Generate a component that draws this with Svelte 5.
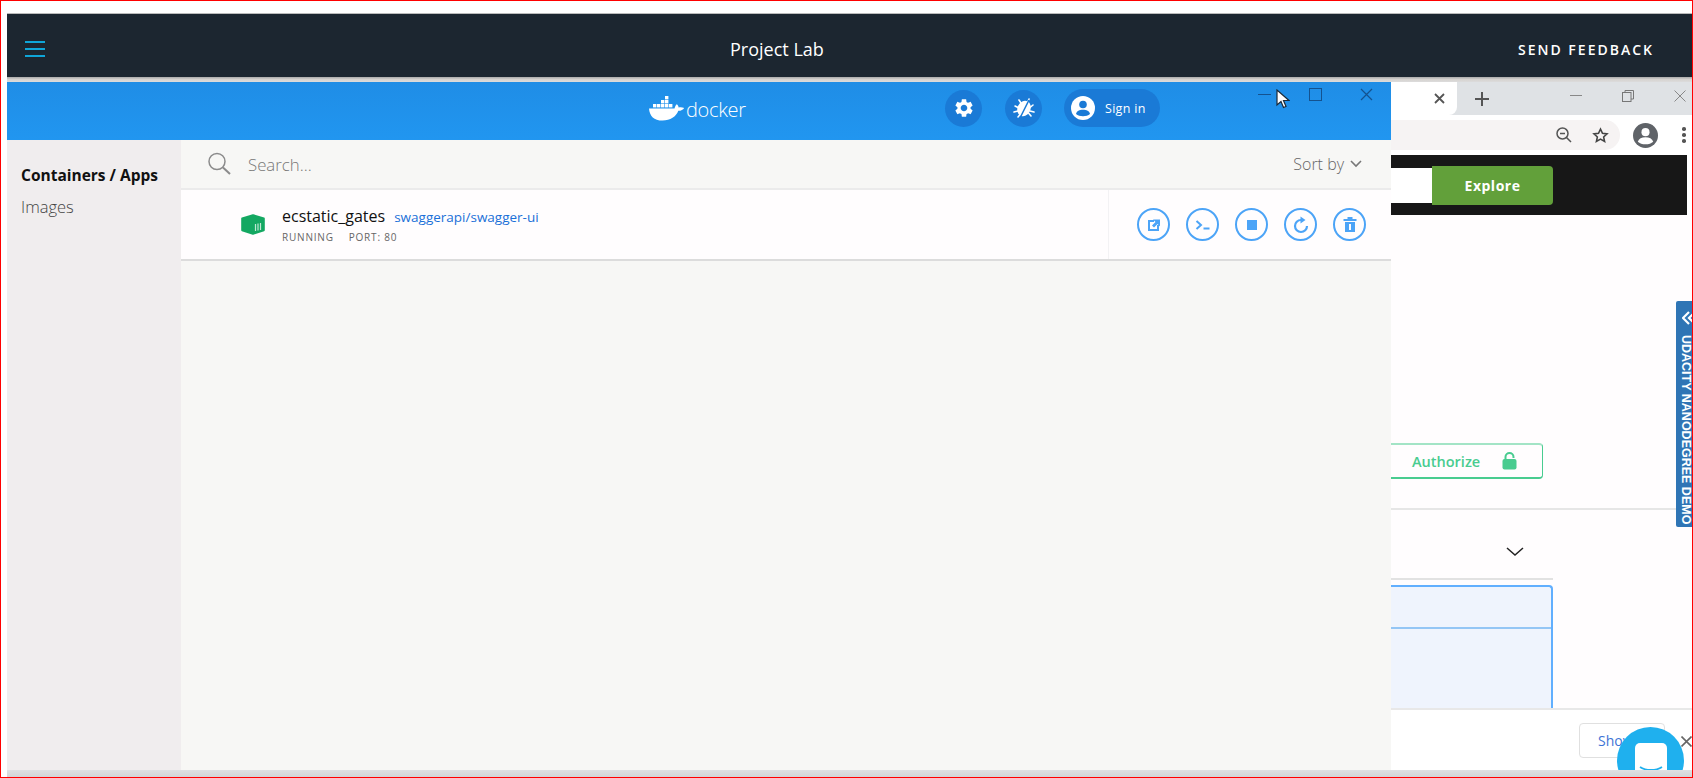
<script>
  let actions = ["open", "cli", "stop", "restart", "delete"];
</script>

<div class="frame">
  <header class="topbar">
    <button class="burger" aria-label="Menu">
      <span></span><span></span><span></span>
    </button>
    <h1>Project Lab</h1>
    <span class="feedback">SEND FEEDBACK</span>
  </header>
  <div class="seam"></div>

  <div class="stage">
    <section class="docker">
      <div class="dk-head">
        <div class="brand">
          <svg width="36" height="26" viewBox="0 0 36 26">
            <g fill="#fff">
              <rect x="8" y="9" width="3.4" height="3.4" /><rect x="12" y="9" width="3.4" height="3.4" /><rect x="16" y="9" width="3.4" height="3.4" />
              <rect x="12" y="5" width="3.4" height="3.4" /><rect x="16" y="5" width="3.4" height="3.4" /><rect x="16" y="1" width="3.4" height="3.4" />
              <rect x="4" y="9" width="3.4" height="3.4" /><rect x="20" y="9" width="3.4" height="3.4" />
              <path d="M0 13.4h25.5c.6-2.2 1.4-3.6 2.4-4.2 1 .9 1.6 2 1.7 3.2 1.900-.5 3.800-.3 5.600.6-1.300 2-3.300 2.900-5.900 2.800C27 21.800 21.500 25.500 13.500 25.500 5 25.500.6 21 0 13.400z" />
            </g>
          </svg>
          <span>docker</span>
        </div>
        <div class="head-tools">
          <span class="round">
            <svg width="22" height="22" viewBox="0 0 24 24"><path fill="#fff" d="M19.14 12.94c.04-.3.06-.61.06-.94 0-.32-.02-.64-.07-.94l2.03-1.58c.18-.14.23-.41.12-.61l-1.92-3.32c-.12-.22-.37-.29-.59-.22l-2.39.96c-.5-.38-1.03-.7-1.62-.94l-.36-2.54c-.04-.24-.24-.41-.48-.41h-3.84c-.24 0-.43.17-.47.41l-.36 2.54c-.59.24-1.13.57-1.62.94l-2.39-.96c-.22-.08-.47 0-.59.22L2.74 8.87c-.12.21-.08.47.12.61l2.03 1.58c-.05.3-.09.63-.09.94s.02.64.07.94l-2.03 1.58c-.18.14-.23.41-.12.61l1.92 3.32c.12.22.37.29.59.22l2.39-.96c.5.38 1.03.7 1.62.94l.36 2.54c.05.24.24.41.48.41h3.840c.24 0 .44-.17.47-.41l.36-2.54c.59-.24 1.13-.56 1.62-.94l2.39.96c.22.08.47 0 .59-.22l1.92-3.32c.12-.22.07-.47-.12-.61l-2.01-1.58zM12 15.6c-1.98 0-3.6-1.62-3.6-3.6s1.62-3.6 3.6-3.6 3.6 1.62 3.6 3.6-1.62 3.6-3.6 3.6z" /></svg>
          </span>
          <span class="round">
            <svg width="26" height="26" viewBox="0 0 26 26">
              <g stroke="#fff" stroke-width="1.600" fill="none" stroke-linecap="round">
                <path d="M8 5l2 3M18 4l-1.500 4M4 11l4 2M22 10l-3 2.500M3 17l4-1M23 17l-4-1M7 22l2.500-3M20 21l-2.500-3" />
              </g>
              <ellipse cx="13" cy="13.500" rx="6.500" ry="8" fill="#fff" transform="rotate(25 13 13.500)" />
              <path d="M18 5L9 23" stroke="#1a7ad6" stroke-width="1.600" />
            </svg>
          </span>
          <span class="signin">
            <svg width="26" height="26" viewBox="0 0 26 26">
              <circle cx="13" cy="13" r="12" fill="#fff" />
              <circle cx="13" cy="9.500" r="3.800" fill="#1a7ad6" />
              <path d="M6 19c.6-3 3.500-4.200 7-4.200s6.400 1.200 7 4.200c-1.800 1.500-4.200 2.200-7 2.200S7.800 20.500 6 19z" fill="#1a7ad6" />
            </svg>
            <span>Sign in</span>
          </span>
        </div>
        <div class="win-ctrl">
          <i class="w-min"></i><i class="w-max"></i>
          <svg width="13" height="13" viewBox="0 0 13 13"><path d="M1 1l11 11M12 1L1 12" stroke="#14528f" stroke-width="1.200" /></svg>
        </div>
      </div>

      <div class="dk-body">
        <aside>
          <div class="nav-on">Containers / Apps</div>
          <div class="nav-off">Images</div>
        </aside>
        <div class="main">
          <div class="search-row">
            <svg class="glass" width="26" height="26" viewBox="0 0 26 26" fill="none" stroke="#8b8b8b">
              <circle cx="11" cy="10.500" r="8" stroke-width="1.500" />
              <path d="M17 16.500l7 6.500" stroke-width="2" />
            </svg>
            <span class="placeholder">Search...</span>
            <span class="sort">Sort by
              <svg width="12" height="8" viewBox="0 0 12 8" fill="none"><path d="M1 1l5 5 5-5" stroke="#777" stroke-width="1.600" /></svg>
            </span>
          </div>
          <div class="row">
            <svg class="box" width="24" height="21" viewBox="0 0 24 21">
              <path d="M12 1.200L22.800 4.500V16.200L12 19.800 1.200 16.200V4.500z" fill="#14a862" stroke="#14a862" stroke-width="2" stroke-linejoin="round" />
              <path d="M14.500 10v7M17 9.500v7M19.500 9v7" stroke="#bfe8d2" stroke-width="1.200" />
            </svg>
            <div class="info">
              <div class="line1">
                <span class="cname">ecstatic_gates</span>
                <span class="image">swaggerapi/swagger-ui</span>
              </div>
              <div class="line2"><span>RUNNING</span><span>PORT: 80</span></div>
            </div>
            <div class="actions">
              {#each actions as a}
                <span class="act">
                  <svg width="22" height="22" viewBox="0 0 22 22" fill="#4ca4f7" stroke="none">
                    {#if a === "open"}
                      <path d="M5 6h6v2H7v7h7v-4h2v6H5z" />
                      <path d="M10 5.500h7v7l-2.500-2.500-3.500 3.500-2-2 3.500-3.500z" />
                    {:else if a === "cli"}
                      <path d="M4.500 7l4.500 4-4.500 4" fill="none" stroke="#4ca4f7" stroke-width="2" />
                      <rect x="11.500" y="13.500" width="6" height="2" />
                    {:else if a === "stop"}
                      <rect x="6" y="6" width="10" height="10" />
                    {:else if a === "restart"}
                      <path d="M11 6a6 6 0 1 0 6 6" fill="none" stroke="#4ca4f7" stroke-width="2.200" />
                      <path d="M10.500 2.500l5 3.500-5 3.500z" />
                    {:else}
                      <rect x="4.500" y="5" width="13" height="2" />
                      <rect x="8.500" y="3" width="5" height="2" />
                      <path d="M6 8h10v10H6zM10 10v6h2v-6z" fill-rule="evenodd" />
                    {/if}
                  </svg>
                </span>
              {/each}
            </div>
          </div>
        </div>
      </div>
    </section>

    <section class="browser">
      <div class="tabstrip">
        <div class="tab">
          <svg width="11" height="11" viewBox="0 0 11 11"><path d="M1 1l9 9M10 1l-9 9" stroke="#555" stroke-width="1.800" /></svg>
        </div>
        <svg class="plus" width="14" height="14" viewBox="0 0 14 14"><path d="M7 0v14M0 7h14" stroke="#555" stroke-width="2" /></svg>
        <div class="br-ctrl">
          <i class="b-min"></i>
          <svg width="12" height="12" viewBox="0 0 12 12" fill="none" stroke="#777"><rect x=".5" y="2.500" width="8.500" height="9" /><path d="M3 2.500V.5h8.500V9H9" /></svg>
          <svg width="12" height="12" viewBox="0 0 12 12"><path d="M.5.5l11 11M11.500.5l-11 11" stroke="#888" stroke-width="1" /></svg>
        </div>
      </div>
      <div class="toolbar">
        <div class="omnibox">
          <svg width="16" height="16" viewBox="0 0 16 16" fill="none" stroke="#555" stroke-width="1.500"><circle cx="6.500" cy="6.500" r="5.500" /><path d="M10.500 10.500l4.500 4.500M4 6.500h5" /></svg>
          <svg width="17" height="17" viewBox="0 0 24 24" fill="none" stroke="#444" stroke-width="2.200"><path d="M12 3l2.800 6 6.400.7-4.800 4.300 1.400 6.500L12 17.200l-5.800 3.300 1.400-6.500L2.800 9.700 9.200 9z" /></svg>
        </div>
        <svg class="avatar" width="25" height="25" viewBox="0 0 26 26">
          <circle cx="13" cy="13" r="13" fill="#5f6368" />
          <circle cx="13" cy="9.500" r="4.200" fill="#fff" />
          <path d="M5 19.500c1-3.300 4-4.600 8-4.600s7 1.300 8 4.600c-1.800 1.700-4.700 2.700-8 2.700s-6.200-1-8-2.700z" fill="#fff" />
        </svg>
        <span class="dots"><i></i><i></i><i></i></span>
      </div>
      <div class="banner">
        <div class="explore">
          <div class="url"></div>
          <div class="go">Explore</div>
        </div>
      </div>

      <div class="page">
        <div class="auth-row">
          <div class="auth">
            <span>Authorize</span>
            <svg width="15" height="18" viewBox="0 0 15 18">
              <path d="M3.500 8V5a4 4 0 0 1 8 0v1" fill="none" stroke="#49cc90" stroke-width="2" />
              <rect x=".5" y="7" width="14" height="10.500" rx="2" fill="#49cc90" />
            </svg>
          </div>
        </div>
        <div class="section-head">
          <svg width="18" height="10" viewBox="0 0 18 10" fill="none"><path d="M1 1l8 7 8-7" stroke="#222" stroke-width="1.500" /></svg>
        </div>
        <div class="op-wrap">
          <div class="op">
            <div class="op-top"></div>
          </div>
        </div>
        <div class="bottom">
          <span class="show">Show</span>
          <svg class="dismiss" width="11" height="11" viewBox="0 0 11 11"><path d="M.5.5l10 10M10.500.5l-10 10" stroke="#666" stroke-width="1.600" /></svg>
        </div>
      </div>
    </section>
  </div>
  <div class="base"></div>

  <!-- overlays -->
  <svg class="cursor" width="14" height="20" viewBox="0 0 14 20">
    <path d="M1 1v15l4-3.500 2.500 6 2.500-1-2.500-6H13z" fill="#fff" stroke="#1b2a38" stroke-width="1.200" />
  </svg>
  <div class="demo-tab">
    <svg width="16" height="14" viewBox="0 0 16 14" fill="none" stroke="#fff" stroke-width="2.200"><path d="M7 1L1 7l6 6M13 1L7 7l6 6" /></svg>
    <span>UDACITY NANODEGREE DEMO</span>
  </div>
  <div class="chat">
    <div class="chat-face">
      <svg width="24" height="6" viewBox="0 0 24 6" fill="none"><path d="M1 1c6 4 16 4 22 0" stroke="#1fb0ee" stroke-width="1.800" /></svg>
    </div>
  </div>
</div>

<style>
  :global(body) {
    margin: 0;
    background: #fff;
  }
  .frame {
    position: relative;
    width: 1693px;
    height: 778px;
    box-sizing: border-box;
    border: 1px solid #f00;
    padding: 12px 0 0 6px;
    display: flex;
    flex-direction: column;
    overflow: hidden;
    background: #fff;
    font-family: "Open Sans", sans-serif;
  }
  .topbar {
    flex: none;
    height: 64px;
    background: #1c2630;
    border-top: 1px solid #bbb;
    box-sizing: border-box;
    display: flex;
    align-items: center;
    justify-content: space-between;
    padding: 7px 38px 0 18px;
    position: relative;
  }
  .burger {
    width: 20px;
    height: 16px;
    padding: 0;
    border: 0;
    background: none;
    display: flex;
    flex-direction: column;
    justify-content: space-between;
  }
  .burger span {
    height: 2px;
    background: #0fa6d9;
  }
  h1 {
    margin: 0;
    font-size: 18px;
    font-weight: 400;
    color: #fff;
    position: absolute;
    left: 723px;
  }
  .feedback {
    color: #fff;
    font-size: 14px;
    font-weight: 600;
    letter-spacing: 2px;
  }
  .seam {
    flex: none;
    height: 5px;
    background: linear-gradient(#a9a9a9, #d6d3d0 50%, #dcdcdc);
  }
  .stage {
    flex: 1;
    min-height: 0;
    display: flex;
  }
  .base {
    flex: none;
    height: 7px;
    background: linear-gradient(#dfe1e3, #d3d5d6);
  }

  .docker {
    flex: none;
    width: 1384px;
    display: flex;
    flex-direction: column;
  }
  .dk-head {
    flex: none;
    height: 58px;
    background: linear-gradient(#1f8de6, #2196f0);
    display: flex;
    align-items: center;
    position: relative;
    padding-left: 642px;
    box-sizing: border-box;
  }
  .brand {
    display: flex;
    align-items: flex-end;
    gap: 1px;
    color: #fff;
    font-size: 20px;
    font-weight: 300;
    line-height: 26px;
    letter-spacing: -.3px;
    width: 296px;
    margin-top: -7px;
  }
  .brand span {
    line-height: 22px;
  }
  .head-tools {
    display: flex;
    align-items: center;
    gap: 23px;
    margin-top: -6px;
  }
  .round {
    width: 37px;
    height: 37px;
    border-radius: 50%;
    background: #1a7ad6;
    display: flex;
    align-items: center;
    justify-content: center;
  }
  .signin {
    width: 96px;
    height: 38px;
    margin-left: -1px;
    padding-left: 6px;
    box-sizing: border-box;
    border-radius: 19px;
    background: #1a7ad6;
    display: flex;
    align-items: center;
    gap: 9px;
    color: #fff;
    font-size: 12.5px;
    letter-spacing: .3px;
  }
  .win-ctrl {
    position: absolute;
    left: 1251px;
    top: 6px;
    display: flex;
    align-items: center;
    gap: 38px;
    height: 13px;
  }
  .win-ctrl i {
    display: block;
  }
  .w-min {
    width: 13px;
    height: 1px;
    background: #14528f;
  }
  .w-max {
    width: 11px;
    height: 11px;
    border: 1px solid #14528f;
  }

  .dk-body {
    flex: 1;
    min-height: 0;
    display: flex;
  }
  aside {
    flex: none;
    width: 174px;
    background: #f0edee;
    padding: 25px 0 0 14px;
    box-sizing: border-box;
  }
  .nav-on {
    font-size: 15.5px;
    font-weight: 700;
    color: #111;
    line-height: 20px;
    white-space: nowrap;
  }
  .nav-off {
    margin-top: 12px;
    font-size: 16.5px;
    font-weight: 300;
    color: #444;
    line-height: 20px;
  }
  .main {
    flex: 1;
    background: #f7f7f5;
    min-width: 0;
  }
  .search-row {
    height: 48px;
    box-sizing: border-box;
    display: flex;
    align-items: center;
    padding: 0 28px 0 25px;
  }
  .placeholder {
    margin-left: 16px;
    font-size: 16.8px;
    font-weight: 300;
    color: #777;
  }
  .sort {
    margin-left: auto;
    display: flex;
    align-items: center;
    gap: 6px;
    margin-right: 1px;
    font-size: 16px;
    font-weight: 300;
    color: #666;
  }
  .row {
    height: 73px;
    box-sizing: border-box;
    background: #fffdfe;
    border-top: 2px solid #ebebeb;
    border-bottom: 2px solid #dcdcdc;
    display: flex;
    align-items: center;
    padding-left: 60px;
    position: relative;
  }
  .box {
    flex: none;
  }
  .info {
    margin-left: 17px;
  }
  .line1 {
    display: flex;
    align-items: baseline;
    gap: 9px;
  }
  .cname {
    font-size: 16px;
    color: #111;
    font-weight: 400;
  }
  .image {
    font-size: 13.5px;
    color: #1a70d8;
  }
  .line2 {
    display: flex;
    gap: 15px;
    margin-top: 3px;
    font-size: 10px;
    letter-spacing: .8px;
    color: #666;
  }
  .actions {
    margin-left: auto;
    height: 100%;
    border-left: 1px solid #f3f2f4;
    padding: 0 25px 0 28px;
    display: flex;
    align-items: center;
    gap: 16px;
  }
  .act {
    width: 33px;
    height: 33px;
    box-sizing: border-box;
    border: 2px solid #4ca4f7;
    border-radius: 50%;
    display: flex;
    align-items: center;
    justify-content: center;
  }

  .browser {
    flex: 1;
    min-width: 0;
    display: flex;
    flex-direction: column;
    background: #fff;
  }
  .tabstrip {
    flex: none;
    height: 33px;
    background: #dfe2e5;
    display: flex;
    align-items: center;
    position: relative;
  }
  .tab {
    width: 66px;
    height: 100%;
    background: #fff;
    border-radius: 0 0 8px 0;
    display: flex;
    align-items: center;
    justify-content: flex-end;
    padding-right: 12px;
    box-sizing: border-box;
  }
  .plus {
    margin-left: 18px;
  }
  .br-ctrl {
    margin-left: auto;
    margin-right: 6px;
    margin-top: -6px;
    display: flex;
    align-items: center;
    gap: 40px;
  }
  .b-min {
    display: block;
    width: 12px;
    height: 1px;
    background: #888;
  }
  .toolbar {
    flex: none;
    height: 40px;
    display: flex;
    align-items: center;
    background: #fff;
  }
  .omnibox {
    width: 229px;
    height: 30px;
    background: #f6f3f3;
    border-radius: 0 15px 15px 0;
    display: flex;
    align-items: center;
    justify-content: flex-end;
    gap: 20px;
    padding-right: 11px;
    box-sizing: border-box;
  }
  .avatar {
    margin-left: 13px;
  }
  .dots {
    margin-left: 24px;
    display: flex;
    flex-direction: column;
    gap: 2.500px;
  }
  .dots i {
    width: 3.500px;
    height: 3.500px;
    border-radius: 50%;
    background: #555;
  }
  .banner {
    flex: none;
    height: 60px;
    margin-right: 5px;
    background: #171717;
    display: flex;
    align-items: center;
  }
  .explore {
    display: flex;
    height: 39px;
    width: 162px;
  }
  .url {
    width: 41px;
    margin: 2px 0;
    background: #fff;
  }
  .go {
    flex: 1;
    background: #62a03a;
    border-radius: 0 4px 4px 0;
    color: #fff;
    font-weight: 700;
    font-size: 14px;
    letter-spacing: .5px;
    display: flex;
    align-items: center;
    justify-content: center;
  }
  .page {
    flex: 1;
    min-height: 0;
    display: flex;
    flex-direction: column;
    background: #fffdfe;
  }
  .auth-row {
    height: 295px;
    flex: none;
    box-sizing: border-box;
    padding-top: 228px;
    border-bottom: 2px solid #e6e6e6;
  }
  .auth {
    width: 152px;
    height: 36px;
    box-sizing: border-box;
    border: 2px solid #49cc90;
    border-left: 0;
    border-top-color: #a3e4c6;
    border-right-width: 1px;
    border-radius: 0 4px 4px 0;
    display: flex;
    align-items: center;
    padding-left: 21px;
    gap: 22px;
    color: #49cc90;
    font-size: 14.500px;
    font-weight: 600;
  }
  .section-head {
    height: 70px;
    flex: none;
    box-sizing: border-box;
    width: 162px;
    border-bottom: 2px solid #e2e2e2;
    display: flex;
    justify-content: flex-end;
    padding: 37px 29px 0 0;
  }
  .op-wrap {
    flex: 1;
    min-height: 0;
    width: 162px;
    padding-top: 5px;
    box-sizing: border-box;
  }
  .op {
    height: 100%;
    background: #eff4fd;
    box-sizing: border-box;
    border-top: 2px solid #61affe;
    border-right: 2px solid #61affe;
    border-radius: 0 4px 0 0;
  }
  .op-top {
    height: 40px;
    border-bottom: 2px solid #94c6f5;
  }
  .bottom {
    flex: none;
    height: 62px;
    background: #fff;
    border-top: 2px solid #e8e8e8;
    box-sizing: border-box;
    display: flex;
    align-items: flex-start;
    padding: 13px 0 0 188px;
    gap: 17px;
  }
  .show {
    width: 86px;
    height: 35px;
    box-sizing: border-box;
    border: 1px solid #e0e0e0;
    border-radius: 4px;
    color: #3d74d6;
    font-size: 14px;
    font-weight: 400;
    padding: 7px 0 0 18px;
  }
  .dismiss {
    margin: 13px 0 0 -1px;
  }

  .cursor {
    position: absolute;
    left: 1275px;
    top: 88px;
  }
  .demo-tab {
    position: absolute;
    left: 1675px;
    top: 300px;
    width: 18px;
    height: 226px;
    background: #2f75b5;
    border-radius: 2px 0 0 2px;
    padding: 10px 0 0 6px;
    box-sizing: border-box;
    color: #fff;
    overflow: hidden;
    display: flex;
    flex-direction: column;
    gap: 10px;
  }
  .demo-tab svg {
    flex: none;
  }
  .demo-tab span {
    writing-mode: vertical-rl;
    font-size: 12.500px;
    font-weight: 700;
    white-space: nowrap;
    font-family: "Liberation Sans", sans-serif;
    line-height: 16px;
  }
  .chat {
    position: absolute;
    left: 1616px;
    top: 726px;
    width: 67px;
    height: 67px;
    border-radius: 50%;
    background: #1fb0ee;
    clip-path: inset(0 0 24px 0);
    display: flex;
    justify-content: center;
    padding-top: 16px;
    box-sizing: border-box;
  }
  .chat-face {
    width: 32px;
    height: 34px;
    background: #fff;
    border-radius: 5px;
    display: flex;
    align-items: flex-end;
    justify-content: center;
    padding-bottom: 5px;
    box-sizing: border-box;
  }
</style>
